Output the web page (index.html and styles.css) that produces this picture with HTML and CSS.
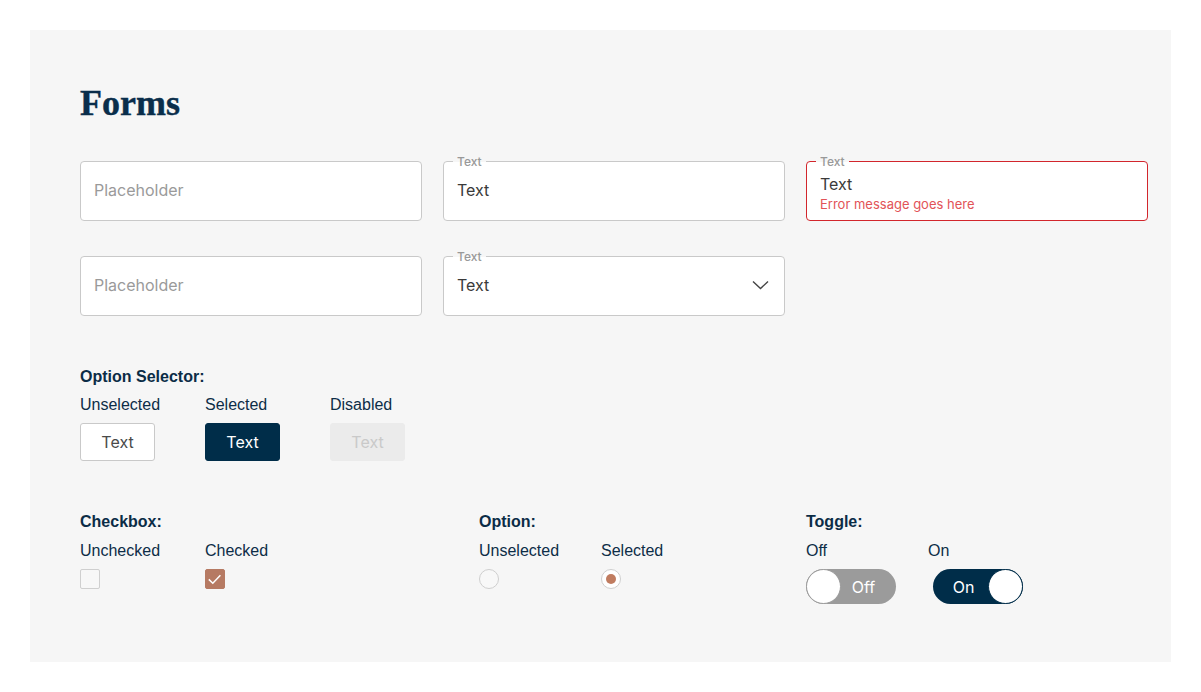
FILE: index.html
```html
<!DOCTYPE html>
<html>
<head>
<meta charset="utf-8">
<link rel="stylesheet" href="styles.css">
</head>
<body>
<main class="panel">
  <h1 class="title">Forms</h1>

  <div class="fields">
    <div class="field"><span class="placeholder">Placeholder</span></div>
    <div class="field"><span class="float-label">Text</span><span class="value">Text</span></div>
    <div class="field field-error"><span class="float-label">Text</span><span class="value">Text</span><span class="error-msg">Error message goes here</span></div>
    <div class="field"><span class="placeholder">Placeholder</span></div>
    <div class="field field-select"><span class="float-label">Text</span><span class="value">Text</span>
      <svg class="chevron" width="17" height="10" viewBox="0 0 17 10"><path d="M1 1.5 L8.5 8.5 L16 1.5" fill="none" stroke="#444" stroke-width="1.4"/></svg>
    </div>
  </div>

  <section class="group group-options">
    <h2 class="group-title">Option Selector:</h2>
    <div class="states states-125">
      <div class="state"><span class="state-label">Unselected</span><span class="btn">Text</span></div>
      <div class="state"><span class="state-label">Selected</span><span class="btn btn-selected">Text</span></div>
      <div class="state"><span class="state-label">Disabled</span><span class="btn btn-disabled">Text</span></div>
    </div>
  </section>

  <div class="controls">
    <section class="group">
      <h2 class="group-title">Checkbox:</h2>
      <div class="states states-125">
        <div class="state"><span class="state-label">Unchecked</span><span class="checkbox"></span></div>
        <div class="state"><span class="state-label">Checked</span><span class="checkbox checkbox-on"><svg width="20" height="20" viewBox="0 0 20 20"><path d="M3.8 10.4 L7.8 14.2 L15.4 6.2" fill="none" stroke="#fff" stroke-width="1.5"/></svg></span></div>
      </div>
    </section>
    <section class="group">
      <h2 class="group-title">Option:</h2>
      <div class="states states-122">
        <div class="state"><span class="state-label">Unselected</span><span class="radio"></span></div>
        <div class="state"><span class="state-label">Selected</span><span class="radio radio-on"><span class="dot"></span></span></div>
      </div>
    </section>
    <section class="group">
      <h2 class="group-title">Toggle:</h2>
      <div class="states states-122">
        <div class="state"><span class="state-label">Off</span><span class="toggle toggle-off"><span class="knob"></span><span class="toggle-text">Off</span></span></div>
        <div class="state"><span class="state-label">On</span><span class="toggle toggle-on"><span class="toggle-text">On</span><span class="knob"></span></span></div>
      </div>
    </section>
  </div>
</main>
</body>
</html>
```
FILE: styles.css
```css
* { box-sizing: border-box; }
html, body { margin: 0; padding: 0; background: #fff; }
body { padding: 30px; }

.panel {
  width: 1141px;
  height: 632px;
  background: #f6f6f6;
  padding: 55px 0 0 50px;
  font-family: "Liberation Sans", Arial, sans-serif;
  color: #0d2d47;
}

.title {
  margin: 0;
  font-family: "Liberation Serif", "Times New Roman", serif;
  font-weight: 700;
  font-size: 36px;
  line-height: 36px;
  color: #0a2e4b;
  -webkit-text-stroke: 0.4px #0a2e4b;
}

.fields {
  margin-top: 40px;
  display: grid;
  grid-template-columns: repeat(3, 342px);
  column-gap: 21px;
  row-gap: 35px;
}

.field {
  position: relative;
  height: 60px;
  background: #fff;
  border: 1px solid #c9c9c9;
  border-radius: 4px;
  padding: 0 13px 2px;
  display: flex;
  flex-direction: column;
  justify-content: center;
  font-family: Inter, "Liberation Sans", sans-serif;
  font-size: 16px;
}

.placeholder { color: #9a9a9a; line-height: 20px; }
.value { color: #3a3a3a; line-height: 20px; }

.float-label {
  position: absolute;
  top: -7px;
  left: 9px;
  padding: 0 4px;
  font-size: 12px;
  line-height: 14px;
  font-weight: 500;
  color: #999;
  background: linear-gradient(#f6f6f6 0, #f6f6f6 7px, #fff 7px);
}

.field-error {
  border-color: #d2262c;
  justify-content: flex-start;
  padding-top: 12px;
}
.error-msg {
  margin-top: 2px;
  font-size: 13px;
  line-height: 17px;
  color: #e25357;
}

.field-select { flex-direction: row; align-items: center; justify-content: space-between; padding-right: 15px; }

.group-title {
  margin: 0;
  font-size: 16px;
  line-height: 20px;
  font-weight: 700;
  color: #0b2c46;
}

.group-options { margin-top: 51px; }

.states { display: flex; margin-top: 8px; }
.states-125 .state { width: 125px; }
.states-122 .state { width: 122px; }

.state { display: flex; flex-direction: column; align-items: flex-start; }
.state-label {
  font-size: 16px;
  line-height: 20px;
  color: #0d2d47;
  margin-bottom: 9px;
}

.btn {
  width: 75px;
  height: 38px;
  margin-top: -1px;
  border: 1px solid #c9c9c9;
  border-radius: 3px;
  background: #fff;
  color: #4a4a4a;
  font-family: Inter, "Liberation Sans", sans-serif;
  font-size: 16px;
  display: flex;
  align-items: center;
  justify-content: center;
}
.btn-selected { background: #002d49; border-color: #002d49; color: #fff; }
.btn-disabled { background: #ebebeb; border-color: #ebebeb; color: #c9c9c9; }

.controls {
  margin-top: 51px;
  display: grid;
  grid-template-columns: 399px 327px 1fr;
}
.controls .states { margin-top: 9px; }
.controls .state-label { margin-bottom: 9px; }

.checkbox {
  width: 20px;
  height: 20px;
  margin-top: -1px;
  border: 1px solid #cfcfcf;
  border-radius: 2px;
  background: #f7f7f7;
  display: block;
}
.checkbox-on { background: #b67a63; border-color: #b67a63; position: relative; }
.checkbox-on svg { position: absolute; left: -1px; top: -1px; }

.radio {
  width: 20px;
  height: 20px;
  margin-top: -1px;
  border: 1px solid #cfcfcf;
  border-radius: 50%;
  background: #f8f8f8;
  display: flex;
  align-items: center;
  justify-content: center;
}
.radio-on { background: #fff; }
.dot { width: 10px; height: 10px; border-radius: 50%; background: #c07c60; }

.toggle {
  width: 90px;
  height: 35px;
  margin-top: -1px;
  border-radius: 18px;
  display: flex;
  align-items: center;
  font-family: Inter, "Liberation Sans", sans-serif;
  font-size: 16px;
  color: #fff;
}
.toggle-off { background: #9b9b9b; }
.toggle-on { background: #002d49; margin-left: 5px; }
.knob {
  width: 35px;
  height: 35px;
  border-radius: 50%;
  background: #fff;
  border: 1px solid #9b9b9b;
  flex: none;
}
.toggle-on .knob { border-color: #002d49; }
.toggle-text { flex: 1; text-align: center; }
.toggle-off .toggle-text { padding-right: 10px; }
.toggle-on .toggle-text { padding-left: 6px; }
```
